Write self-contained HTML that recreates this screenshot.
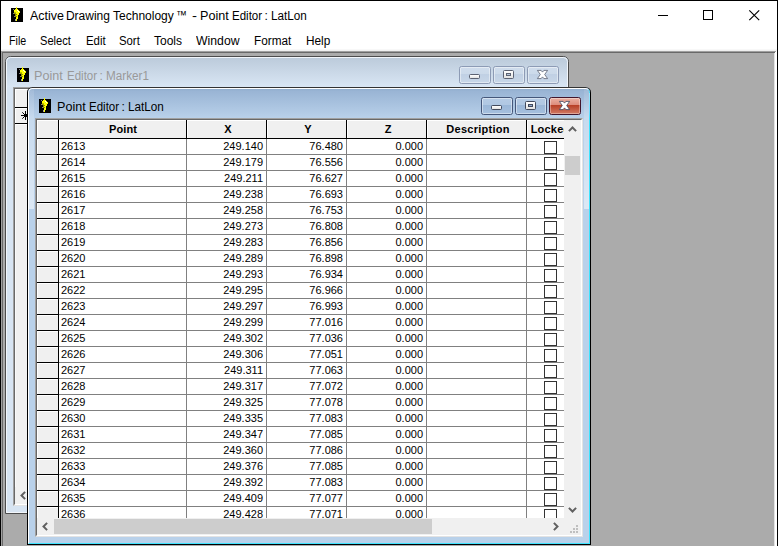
<!DOCTYPE html><html><head><meta charset="utf-8"><title>Active Drawing Technology</title><style>
html,body{margin:0;padding:0;}
body{width:778px;height:546px;overflow:hidden;position:relative;background:#ababab;font-family:"Liberation Sans",sans-serif;}
div,span,svg{position:absolute;box-sizing:border-box;}
.t{white-space:nowrap;transform-origin:0 0;}
.ico{display:block;}
#top{left:0;top:0;width:778px;height:51px;background:#fff;}
.ttl{font-size:12px;line-height:14px;color:#000;top:9px;}
.mi{font-size:12px;line-height:14px;color:#000;top:34px;}
.win{width:564px;height:458px;border:1px solid #000;border-radius:5.5px 5.5px 0 0;overflow:hidden;}
.cap{font-size:12px;line-height:14px;}
.btn{width:32px;height:18px;top:9px;border-radius:2.5px;border:1px solid #4a5c7c;}
.btn i{position:absolute;left:0;top:0;right:0;bottom:0;border:1px solid rgba(255,255,255,.45);border-radius:1.5px;}
.cli{background:#f0f0f0;}
.hc{background:#f0f0f0;border-left:1px solid #fff;border-top:1px solid #fff;font-weight:bold;font-size:11px;line-height:13px;text-align:center;height:18px;top:0;padding-top:2px;overflow:hidden;white-space:nowrap;}
.row{left:0;width:527px;height:16px;font-size:11px;line-height:13px;}
.row span{top:1px;white-space:nowrap;}
.cb{width:13px;height:13px;border:1px solid #333;background:#fff;left:507px;}
</style></head><body><div id="top"></div><div style="left:0;top:49px;width:778px;height:1px;background:#f8f8f8"></div><div style="left:0;top:50px;width:778px;height:1px;background:#f0f0f0"></div><div style="left:0;top:51px;width:778px;height:1px;background:#a0a0a0"></div><div style="left:2px;top:52px;width:773px;height:1px;background:#696969"></div><div style="left:1px;top:51px;width:1px;height:495px;background:#a0a0a0"></div><div style="left:2px;top:52px;width:1px;height:494px;background:#696969"></div><div style="left:774px;top:53px;width:1px;height:493px;background:#e3e3e3"></div><div style="left:775px;top:52px;width:2px;height:494px;background:#fff"></div><div style="left:776px;top:51px;width:1px;height:1px;background:#fff"></div><svg class="ico" style="left:11px;top:7px" width="12" height="15" viewBox="0 -1 12 15" shape-rendering="crispEdges"><rect x="0" y="0" width="12" height="14" fill="#000"/><rect x="5" y="-1" width="1" height="1" fill="#ffff00"/><rect x="5" y="0" width="1" height="1" fill="#ffff00"/><rect x="4" y="1" width="3" height="1" fill="#ffff00"/><rect x="2" y="1" width="1" height="1" fill="#808080"/><rect x="3" y="2" width="5" height="1" fill="#ffff00"/><rect x="6" y="2" width="1" height="1" fill="#ffffff"/><rect x="3" y="3" width="6" height="1" fill="#ffff00"/><rect x="7" y="3" width="1" height="1" fill="#ffffff"/><rect x="3" y="4" width="2" height="1" fill="#c0c000"/><rect x="5" y="4" width="4" height="1" fill="#ffff00"/><rect x="2" y="5" width="1" height="1" fill="#808080"/><rect x="3" y="5" width="2" height="1" fill="#a0a000"/><rect x="5" y="5" width="3" height="1" fill="#ffff00"/><rect x="4" y="6" width="2" height="1" fill="#909000"/><rect x="6" y="6" width="2" height="1" fill="#ffff00"/><rect x="4" y="7" width="1" height="1" fill="#909000"/><rect x="5" y="7" width="2" height="1" fill="#ffff00"/><rect x="3" y="8" width="1" height="1" fill="#808080"/><rect x="4" y="8" width="2" height="1" fill="#909000"/><rect x="6" y="8" width="1" height="1" fill="#ffff00"/><rect x="5" y="9" width="2" height="1" fill="#ffff00"/><rect x="5" y="10" width="2" height="1" fill="#ffff00"/><rect x="4" y="11" width="1" height="1" fill="#a0a0a0"/><rect x="5" y="11" width="1" height="1" fill="#ffff00"/><rect x="4" y="12" width="1" height="1" fill="#a0a0a0"/><rect x="5" y="12" width="1" height="1" fill="#ffff00"/></svg><span class="t ttl" style="left:30.20px;transform:scaleX(1.04)">Active </span><span class="t ttl" style="left:65.95px;transform:scaleX(1.0)">Drawing Technology </span><span class="t ttl" id="t2" style="left:176px;top:8px;transform:scaleX(.9)">™</span><span class="t ttl" style="left:191.86px;transform:scaleX(1.25)">- </span><span class="t ttl" style="left:199.56px;transform:scaleX(1.05)">Point </span><span class="t ttl" style="left:231.99px;transform:scaleX(0.96)">Editor </span><span class="t ttl" style="left:264.50px;transform:scaleX(1)">: </span><span class="t ttl" style="left:270.92px;transform:scaleX(0.977)">LatLon </span><span class="t mi" id="m0" style="left:8.5px;transform:scaleX(0.89)">File</span><span class="t mi" id="m1" style="left:40px;transform:scaleX(0.927)">Select</span><span class="t mi" id="m2" style="left:85.5px;transform:scaleX(0.95)">Edit</span><span class="t mi" id="m3" style="left:119px;transform:scaleX(0.945)">Sort</span><span class="t mi" id="m4" style="left:154px;transform:scaleX(1)">Tools</span><span class="t mi" id="m5" style="left:195.5px;transform:scaleX(1.02)">Window</span><span class="t mi" id="m6" style="left:253.5px;transform:scaleX(0.98)">Format</span><span class="t mi" id="m7" style="left:305.5px;transform:scaleX(0.985)">Help</span><svg style="left:655px;top:5px" width="110" height="22" viewBox="655 5 110 22" shape-rendering="crispEdges"><rect x="658" y="15" width="10" height="1" fill="#000"/><rect x="703.5" y="10.5" width="9" height="9" fill="none" stroke="#000" stroke-width="1"/><g shape-rendering="auto"><path d="M749.3 10.3 L759.2 20.2 M759.2 10.3 L749.3 20.2" stroke="#000" stroke-width="1.15" fill="none"/></g></svg><div style="left:0;top:0;width:778px;height:1px;background:#000"></div><div style="left:0;top:0;width:1px;height:546px;background:#000"></div><div style="left:777px;top:0;width:1px;height:546px;background:#000"></div><div class="win" style="left:5px;top:56px;border-color:#4c4c4c;background:#d7e4f2"><div style="left:0;top:0;width:562px;height:30px;background:linear-gradient(#bbcada,#d9e6f4)"></div><div style="left:0;top:0;width:562px;height:456px;border:1px solid #f2f6fb;border-radius:4.5px 4.5px 0 0;"></div><svg class="ico" style="left:11px;top:10px" width="12" height="15" viewBox="0 -1 12 15" shape-rendering="crispEdges"><rect x="0" y="0" width="12" height="14" fill="#000"/><rect x="5" y="-1" width="1" height="1" fill="#ffff00"/><rect x="5" y="0" width="1" height="1" fill="#ffff00"/><rect x="4" y="1" width="3" height="1" fill="#ffff00"/><rect x="2" y="1" width="1" height="1" fill="#808080"/><rect x="3" y="2" width="5" height="1" fill="#ffff00"/><rect x="6" y="2" width="1" height="1" fill="#ffffff"/><rect x="3" y="3" width="6" height="1" fill="#ffff00"/><rect x="7" y="3" width="1" height="1" fill="#ffffff"/><rect x="3" y="4" width="2" height="1" fill="#c0c000"/><rect x="5" y="4" width="4" height="1" fill="#ffff00"/><rect x="2" y="5" width="1" height="1" fill="#808080"/><rect x="3" y="5" width="2" height="1" fill="#a0a000"/><rect x="5" y="5" width="3" height="1" fill="#ffff00"/><rect x="4" y="6" width="2" height="1" fill="#909000"/><rect x="6" y="6" width="2" height="1" fill="#ffff00"/><rect x="4" y="7" width="1" height="1" fill="#909000"/><rect x="5" y="7" width="2" height="1" fill="#ffff00"/><rect x="3" y="8" width="1" height="1" fill="#808080"/><rect x="4" y="8" width="2" height="1" fill="#909000"/><rect x="6" y="8" width="1" height="1" fill="#ffff00"/><rect x="5" y="9" width="2" height="1" fill="#ffff00"/><rect x="5" y="10" width="2" height="1" fill="#ffff00"/><rect x="4" y="11" width="1" height="1" fill="#a0a0a0"/><rect x="5" y="11" width="1" height="1" fill="#ffff00"/><rect x="4" y="12" width="1" height="1" fill="#a0a0a0"/><rect x="5" y="12" width="1" height="1" fill="#ffff00"/></svg><span class="t cap" style="left:28.45px;transform:scaleX(1.05);top:12px;color:#999">Point </span><span class="t cap" style="left:60.89px;transform:scaleX(0.96);top:12px;color:#999">Editor </span><span class="t cap" style="left:93.40px;transform:scaleX(1);top:12px;color:#999">: </span><span class="t cap" style="left:99.82px;transform:scaleX(0.975);top:12px;color:#999">Marker1 </span><div class="btn" style="left:453px;background:linear-gradient(#cfdcec 0,#ccdaea 44%,#c0d0e4 45%,#c8d7e8 100%);border-color:#8d9bb5"><i></i></div><div class="btn" style="left:487px;background:linear-gradient(#cfdcec 0,#ccdaea 44%,#c0d0e4 45%,#c8d7e8 100%);border-color:#8d9bb5"><i></i></div><div class="btn" style="left:521px;background:linear-gradient(#cfdcec 0,#ccdaea 44%,#c0d0e4 45%,#c8d7e8 100%);border-color:#8d9bb5"><i></i></div><div style="left:463px;top:17px;width:11px;height:5px;background:linear-gradient(#fff,#e2e2e2);border:1px solid #5c6272;border-radius:1.5px"></div><div style="left:497px;top:13px;width:11px;height:9px;background:linear-gradient(#fff,#e2e2e2);border:1px solid #5c6272;border-radius:1.5px"></div><div style="left:500px;top:16px;width:5px;height:3px;background:#b8c8dc;border:1px solid #5c6272"></div><svg style="left:530px;top:12px" width="13" height="11" viewBox="-1 -1 13 11"><path d="M0.4 0.4 H4.1 L5.5 2.1 L6.9 0.4 H10.6 L7.7 4.5 L10.6 8.6 H6.9 L5.5 6.9 L4.1 8.6 H0.4 L3.3 4.5 Z" fill="#fff" stroke="#5c6272" stroke-width=".8" stroke-linejoin="round"/></svg><div style="left:7px;top:30px;width:548px;height:419px;border:1px solid;border-color:#a0a0a0 #e3e3e3 #e3e3e3 #a0a0a0;"></div><div class="cli" style="left:8px;top:31px;width:546px;height:417px;border:1px solid;border-color:#696969 #fff #fff #696969;"><div class="hc" style="left:0;width:22px"></div><div style="left:0;top:18px;width:22px;height:1px;background:#000"></div><div style="left:0;top:19px;width:22px;height:15px;border-left:1px solid #fff;border-top:1px solid #fff"></div><div style="left:0;top:34px;width:22px;height:1px;background:#000"></div><div style="left:0;top:35px;width:22px;height:363px;border-left:1px solid #fafafa;border-top:1px solid #fff"></div><svg style="left:5px;top:22px" width="10" height="10" viewBox="0 0 10 10"><path d="M5.5 0 V9 M1 4.5 H10 M2.3 1.3 L8.7 7.7 M8.7 1.3 L2.3 7.7" stroke="#000" stroke-width="1" fill="none"/><rect x="4" y="3" width="3" height="3" fill="#000"/></svg><span style="left:5px;top:398px;font-size:11px;color:#606060" class="arr"></span><svg style="left:5px;top:402px" width="7" height="9" viewBox="0 0 7 9"><path d="M5.1 0.9 L1.5 4.5 L5.1 8.1" fill="none" stroke="#606060" stroke-width="2"/></svg></div></div><div class="win" style="left:27px;top:87px;border-color:#333 #000 #000 #000;background:#b9d1ea"><div style="left:0;top:0;width:562px;height:30px;background:linear-gradient(#90adcd,#9ab5d5 12%,#b9d1ea)"></div><div style="left:0;top:0;width:562px;height:456px;border:1px solid #fff;border-radius:4.5px 4.5px 0 0;border-right-color:#3fe4ff;border-bottom-color:#3fe4ff;"></div><div style="left:1px;top:1px;width:5px;height:120px;background:linear-gradient(rgba(255,255,255,.1),rgba(255,255,255,.5))"></div><div style="left:556px;top:1px;width:5px;height:120px;background:linear-gradient(rgba(255,255,255,.1),rgba(255,255,255,.5))"></div><div style="left:561px;top:5px;width:1px;height:26px;background:linear-gradient(#9be6fb,#6fdcfd 70%,#3fe4ff)"></div><svg class="ico" style="left:11px;top:10px" width="12" height="15" viewBox="0 -1 12 15" shape-rendering="crispEdges"><rect x="0" y="0" width="12" height="14" fill="#000"/><rect x="5" y="-1" width="1" height="1" fill="#ffff00"/><rect x="5" y="0" width="1" height="1" fill="#ffff00"/><rect x="4" y="1" width="3" height="1" fill="#ffff00"/><rect x="2" y="1" width="1" height="1" fill="#808080"/><rect x="3" y="2" width="5" height="1" fill="#ffff00"/><rect x="6" y="2" width="1" height="1" fill="#ffffff"/><rect x="3" y="3" width="6" height="1" fill="#ffff00"/><rect x="7" y="3" width="1" height="1" fill="#ffffff"/><rect x="3" y="4" width="2" height="1" fill="#c0c000"/><rect x="5" y="4" width="4" height="1" fill="#ffff00"/><rect x="2" y="5" width="1" height="1" fill="#808080"/><rect x="3" y="5" width="2" height="1" fill="#a0a000"/><rect x="5" y="5" width="3" height="1" fill="#ffff00"/><rect x="4" y="6" width="2" height="1" fill="#909000"/><rect x="6" y="6" width="2" height="1" fill="#ffff00"/><rect x="4" y="7" width="1" height="1" fill="#909000"/><rect x="5" y="7" width="2" height="1" fill="#ffff00"/><rect x="3" y="8" width="1" height="1" fill="#808080"/><rect x="4" y="8" width="2" height="1" fill="#909000"/><rect x="6" y="8" width="1" height="1" fill="#ffff00"/><rect x="5" y="9" width="2" height="1" fill="#ffff00"/><rect x="5" y="10" width="2" height="1" fill="#ffff00"/><rect x="4" y="11" width="1" height="1" fill="#a0a0a0"/><rect x="5" y="11" width="1" height="1" fill="#ffff00"/><rect x="4" y="12" width="1" height="1" fill="#a0a0a0"/><rect x="5" y="12" width="1" height="1" fill="#ffff00"/></svg><span class="t cap" style="left:28.66px;transform:scaleX(1.05);top:12px;color:#000">Point </span><span class="t cap" style="left:61.09px;transform:scaleX(0.96);top:12px;color:#000">Editor </span><span class="t cap" style="left:93.60px;transform:scaleX(1);top:12px;color:#000">: </span><span class="t cap" style="left:100.02px;transform:scaleX(0.977);top:12px;color:#000">LatLon </span><div class="btn" style="left:453px;background:linear-gradient(#b5cbe5 0,#b0c7e2 44%,#9bb7d8 45%,#a6c0de 100%);border-color:#45577a"><i></i></div><div class="btn" style="left:487px;background:linear-gradient(#b5cbe5 0,#b0c7e2 44%,#9bb7d8 45%,#a6c0de 100%);border-color:#45577a"><i></i></div><div class="btn" style="left:521px;background:linear-gradient(#eab0a2 0,#dd8b7a 44%,#b73f25 45%,#d17a64 100%);border-color:#43152a"><i style="border-color:rgba(255,255,255,.35)"></i></div><div style="left:463px;top:17px;width:11px;height:5px;background:linear-gradient(#fff,#e2e2e2);border:1px solid #434a5c;border-radius:1.5px"></div><div style="left:497px;top:13px;width:11px;height:9px;background:linear-gradient(#fff,#e2e2e2);border:1px solid #434a5c;border-radius:1.5px"></div><div style="left:500px;top:16px;width:5px;height:3px;background:#8fa9cc;border:1px solid #434a5c"></div><svg style="left:530px;top:12px" width="13" height="11" viewBox="-1 -1 13 11"><path d="M0.4 0.4 H4.1 L5.5 2.1 L6.9 0.4 H10.6 L7.7 4.5 L10.6 8.6 H6.9 L5.5 6.9 L4.1 8.6 H0.4 L3.3 4.5 Z" fill="#fff" stroke="#3d4660" stroke-width=".8" stroke-linejoin="round"/></svg><div style="left:7px;top:30px;width:548px;height:419px;border:1px solid;border-color:#a0a0a0 #e3e3e3 #e3e3e3 #a0a0a0;"></div><div class="cli" style="left:8px;top:31px;width:546px;height:417px;border:1px solid;border-color:#696969 #fff #fff #696969;overflow:hidden"><div id="grid" style="left:0;top:0;width:527px;height:398px;background:#fff;overflow:hidden"><div class="hc" style="left:0px;width:21px"></div><div style="left:21px;top:0;width:1px;height:19px;background:#000"></div><div class="hc" style="left:22px;width:127px;letter-spacing:.1px">Point</div><div style="left:149px;top:0;width:1px;height:19px;background:#000"></div><div class="hc" style="left:150px;width:79px;padding-left:2px">X</div><div style="left:229px;top:0;width:1px;height:19px;background:#000"></div><div class="hc" style="left:230px;width:79px;padding-left:2px">Y</div><div style="left:309px;top:0;width:1px;height:19px;background:#000"></div><div class="hc" style="left:310px;width:79px;padding-left:2px">Z</div><div style="left:389px;top:0;width:1px;height:19px;background:#000"></div><div class="hc" style="left:390px;width:99px;padding-left:2px;letter-spacing:.25px">Description</div><div style="left:489px;top:0;width:1px;height:19px;background:#000"></div><div class="hc" style="left:490px;width:37px;text-align:left;padding-left:2.7px;letter-spacing:.2px">Locked</div><div style="left:536px;top:0;width:1px;height:19px;background:#000"></div><div style="left:0;top:18px;width:600px;height:1px;background:#000"></div><div class="row" style="top:19px"><div style="left:0;top:0;width:21px;height:15px;background:#f0f0f0;border-left:1px solid #fff;border-top:1px solid #fff"></div><div style="left:0;top:15px;width:22px;height:1px;background:#000"></div><div style="left:22px;top:15px;width:560px;height:1px;background:#808080"></div><span style="left:24px">2613</span><span style="right:301px">249.140</span><span style="right:221px">76.480</span><span style="right:141px">0.000</span><div class="cb" style="top:2px"></div></div><div class="row" style="top:35px"><div style="left:0;top:0;width:21px;height:15px;background:#f0f0f0;border-left:1px solid #fff;border-top:1px solid #fff"></div><div style="left:0;top:15px;width:22px;height:1px;background:#000"></div><div style="left:22px;top:15px;width:560px;height:1px;background:#808080"></div><span style="left:24px">2614</span><span style="right:301px">249.179</span><span style="right:221px">76.556</span><span style="right:141px">0.000</span><div class="cb" style="top:2px"></div></div><div class="row" style="top:51px"><div style="left:0;top:0;width:21px;height:15px;background:#f0f0f0;border-left:1px solid #fff;border-top:1px solid #fff"></div><div style="left:0;top:15px;width:22px;height:1px;background:#000"></div><div style="left:22px;top:15px;width:560px;height:1px;background:#808080"></div><span style="left:24px">2615</span><span style="right:301px">249.211</span><span style="right:221px">76.627</span><span style="right:141px">0.000</span><div class="cb" style="top:2px"></div></div><div class="row" style="top:67px"><div style="left:0;top:0;width:21px;height:15px;background:#f0f0f0;border-left:1px solid #fff;border-top:1px solid #fff"></div><div style="left:0;top:15px;width:22px;height:1px;background:#000"></div><div style="left:22px;top:15px;width:560px;height:1px;background:#808080"></div><span style="left:24px">2616</span><span style="right:301px">249.238</span><span style="right:221px">76.693</span><span style="right:141px">0.000</span><div class="cb" style="top:2px"></div></div><div class="row" style="top:83px"><div style="left:0;top:0;width:21px;height:15px;background:#f0f0f0;border-left:1px solid #fff;border-top:1px solid #fff"></div><div style="left:0;top:15px;width:22px;height:1px;background:#000"></div><div style="left:22px;top:15px;width:560px;height:1px;background:#808080"></div><span style="left:24px">2617</span><span style="right:301px">249.258</span><span style="right:221px">76.753</span><span style="right:141px">0.000</span><div class="cb" style="top:2px"></div></div><div class="row" style="top:99px"><div style="left:0;top:0;width:21px;height:15px;background:#f0f0f0;border-left:1px solid #fff;border-top:1px solid #fff"></div><div style="left:0;top:15px;width:22px;height:1px;background:#000"></div><div style="left:22px;top:15px;width:560px;height:1px;background:#808080"></div><span style="left:24px">2618</span><span style="right:301px">249.273</span><span style="right:221px">76.808</span><span style="right:141px">0.000</span><div class="cb" style="top:2px"></div></div><div class="row" style="top:115px"><div style="left:0;top:0;width:21px;height:15px;background:#f0f0f0;border-left:1px solid #fff;border-top:1px solid #fff"></div><div style="left:0;top:15px;width:22px;height:1px;background:#000"></div><div style="left:22px;top:15px;width:560px;height:1px;background:#808080"></div><span style="left:24px">2619</span><span style="right:301px">249.283</span><span style="right:221px">76.856</span><span style="right:141px">0.000</span><div class="cb" style="top:2px"></div></div><div class="row" style="top:131px"><div style="left:0;top:0;width:21px;height:15px;background:#f0f0f0;border-left:1px solid #fff;border-top:1px solid #fff"></div><div style="left:0;top:15px;width:22px;height:1px;background:#000"></div><div style="left:22px;top:15px;width:560px;height:1px;background:#808080"></div><span style="left:24px">2620</span><span style="right:301px">249.289</span><span style="right:221px">76.898</span><span style="right:141px">0.000</span><div class="cb" style="top:2px"></div></div><div class="row" style="top:147px"><div style="left:0;top:0;width:21px;height:15px;background:#f0f0f0;border-left:1px solid #fff;border-top:1px solid #fff"></div><div style="left:0;top:15px;width:22px;height:1px;background:#000"></div><div style="left:22px;top:15px;width:560px;height:1px;background:#808080"></div><span style="left:24px">2621</span><span style="right:301px">249.293</span><span style="right:221px">76.934</span><span style="right:141px">0.000</span><div class="cb" style="top:2px"></div></div><div class="row" style="top:163px"><div style="left:0;top:0;width:21px;height:15px;background:#f0f0f0;border-left:1px solid #fff;border-top:1px solid #fff"></div><div style="left:0;top:15px;width:22px;height:1px;background:#000"></div><div style="left:22px;top:15px;width:560px;height:1px;background:#808080"></div><span style="left:24px">2622</span><span style="right:301px">249.295</span><span style="right:221px">76.966</span><span style="right:141px">0.000</span><div class="cb" style="top:2px"></div></div><div class="row" style="top:179px"><div style="left:0;top:0;width:21px;height:15px;background:#f0f0f0;border-left:1px solid #fff;border-top:1px solid #fff"></div><div style="left:0;top:15px;width:22px;height:1px;background:#000"></div><div style="left:22px;top:15px;width:560px;height:1px;background:#808080"></div><span style="left:24px">2623</span><span style="right:301px">249.297</span><span style="right:221px">76.993</span><span style="right:141px">0.000</span><div class="cb" style="top:2px"></div></div><div class="row" style="top:195px"><div style="left:0;top:0;width:21px;height:15px;background:#f0f0f0;border-left:1px solid #fff;border-top:1px solid #fff"></div><div style="left:0;top:15px;width:22px;height:1px;background:#000"></div><div style="left:22px;top:15px;width:560px;height:1px;background:#808080"></div><span style="left:24px">2624</span><span style="right:301px">249.299</span><span style="right:221px">77.016</span><span style="right:141px">0.000</span><div class="cb" style="top:2px"></div></div><div class="row" style="top:211px"><div style="left:0;top:0;width:21px;height:15px;background:#f0f0f0;border-left:1px solid #fff;border-top:1px solid #fff"></div><div style="left:0;top:15px;width:22px;height:1px;background:#000"></div><div style="left:22px;top:15px;width:560px;height:1px;background:#808080"></div><span style="left:24px">2625</span><span style="right:301px">249.302</span><span style="right:221px">77.036</span><span style="right:141px">0.000</span><div class="cb" style="top:2px"></div></div><div class="row" style="top:227px"><div style="left:0;top:0;width:21px;height:15px;background:#f0f0f0;border-left:1px solid #fff;border-top:1px solid #fff"></div><div style="left:0;top:15px;width:22px;height:1px;background:#000"></div><div style="left:22px;top:15px;width:560px;height:1px;background:#808080"></div><span style="left:24px">2626</span><span style="right:301px">249.306</span><span style="right:221px">77.051</span><span style="right:141px">0.000</span><div class="cb" style="top:2px"></div></div><div class="row" style="top:243px"><div style="left:0;top:0;width:21px;height:15px;background:#f0f0f0;border-left:1px solid #fff;border-top:1px solid #fff"></div><div style="left:0;top:15px;width:22px;height:1px;background:#000"></div><div style="left:22px;top:15px;width:560px;height:1px;background:#808080"></div><span style="left:24px">2627</span><span style="right:301px">249.311</span><span style="right:221px">77.063</span><span style="right:141px">0.000</span><div class="cb" style="top:2px"></div></div><div class="row" style="top:259px"><div style="left:0;top:0;width:21px;height:15px;background:#f0f0f0;border-left:1px solid #fff;border-top:1px solid #fff"></div><div style="left:0;top:15px;width:22px;height:1px;background:#000"></div><div style="left:22px;top:15px;width:560px;height:1px;background:#808080"></div><span style="left:24px">2628</span><span style="right:301px">249.317</span><span style="right:221px">77.072</span><span style="right:141px">0.000</span><div class="cb" style="top:2px"></div></div><div class="row" style="top:275px"><div style="left:0;top:0;width:21px;height:15px;background:#f0f0f0;border-left:1px solid #fff;border-top:1px solid #fff"></div><div style="left:0;top:15px;width:22px;height:1px;background:#000"></div><div style="left:22px;top:15px;width:560px;height:1px;background:#808080"></div><span style="left:24px">2629</span><span style="right:301px">249.325</span><span style="right:221px">77.078</span><span style="right:141px">0.000</span><div class="cb" style="top:2px"></div></div><div class="row" style="top:291px"><div style="left:0;top:0;width:21px;height:15px;background:#f0f0f0;border-left:1px solid #fff;border-top:1px solid #fff"></div><div style="left:0;top:15px;width:22px;height:1px;background:#000"></div><div style="left:22px;top:15px;width:560px;height:1px;background:#808080"></div><span style="left:24px">2630</span><span style="right:301px">249.335</span><span style="right:221px">77.083</span><span style="right:141px">0.000</span><div class="cb" style="top:2px"></div></div><div class="row" style="top:307px"><div style="left:0;top:0;width:21px;height:15px;background:#f0f0f0;border-left:1px solid #fff;border-top:1px solid #fff"></div><div style="left:0;top:15px;width:22px;height:1px;background:#000"></div><div style="left:22px;top:15px;width:560px;height:1px;background:#808080"></div><span style="left:24px">2631</span><span style="right:301px">249.347</span><span style="right:221px">77.085</span><span style="right:141px">0.000</span><div class="cb" style="top:2px"></div></div><div class="row" style="top:323px"><div style="left:0;top:0;width:21px;height:15px;background:#f0f0f0;border-left:1px solid #fff;border-top:1px solid #fff"></div><div style="left:0;top:15px;width:22px;height:1px;background:#000"></div><div style="left:22px;top:15px;width:560px;height:1px;background:#808080"></div><span style="left:24px">2632</span><span style="right:301px">249.360</span><span style="right:221px">77.086</span><span style="right:141px">0.000</span><div class="cb" style="top:2px"></div></div><div class="row" style="top:339px"><div style="left:0;top:0;width:21px;height:15px;background:#f0f0f0;border-left:1px solid #fff;border-top:1px solid #fff"></div><div style="left:0;top:15px;width:22px;height:1px;background:#000"></div><div style="left:22px;top:15px;width:560px;height:1px;background:#808080"></div><span style="left:24px">2633</span><span style="right:301px">249.376</span><span style="right:221px">77.085</span><span style="right:141px">0.000</span><div class="cb" style="top:2px"></div></div><div class="row" style="top:355px"><div style="left:0;top:0;width:21px;height:15px;background:#f0f0f0;border-left:1px solid #fff;border-top:1px solid #fff"></div><div style="left:0;top:15px;width:22px;height:1px;background:#000"></div><div style="left:22px;top:15px;width:560px;height:1px;background:#808080"></div><span style="left:24px">2634</span><span style="right:301px">249.392</span><span style="right:221px">77.083</span><span style="right:141px">0.000</span><div class="cb" style="top:2px"></div></div><div class="row" style="top:371px"><div style="left:0;top:0;width:21px;height:15px;background:#f0f0f0;border-left:1px solid #fff;border-top:1px solid #fff"></div><div style="left:0;top:15px;width:22px;height:1px;background:#000"></div><div style="left:22px;top:15px;width:560px;height:1px;background:#808080"></div><span style="left:24px">2635</span><span style="right:301px">249.409</span><span style="right:221px">77.077</span><span style="right:141px">0.000</span><div class="cb" style="top:2px"></div></div><div class="row" style="top:387px"><div style="left:0;top:0;width:21px;height:15px;background:#f0f0f0;border-left:1px solid #fff;border-top:1px solid #fff"></div><div style="left:0;top:15px;width:22px;height:1px;background:#000"></div><div style="left:22px;top:15px;width:560px;height:1px;background:#808080"></div><span style="left:24px">2636</span><span style="right:301px">249.428</span><span style="right:221px">77.071</span><span style="right:141px">0.000</span><div class="cb" style="top:2px"></div></div><div style="left:21px;top:19px;width:1px;height:400px;background:#000"></div><div style="left:149px;top:19px;width:1px;height:400px;background:#808080"></div><div style="left:229px;top:19px;width:1px;height:400px;background:#808080"></div><div style="left:309px;top:19px;width:1px;height:400px;background:#808080"></div><div style="left:389px;top:19px;width:1px;height:400px;background:#808080"></div><div style="left:489px;top:19px;width:1px;height:400px;background:#808080"></div></div><div style="left:527px;top:0;width:17px;height:398px;background:#f0f0f0"></div><div style="left:528px;top:36px;width:15px;height:19px;background:#cdcdcd"></div><svg style="left:531px;top:5px" width="9" height="7" viewBox="0 0 9 7"><path d="M0.9 6.1 L4.5 2.5 L8.1 6.1" fill="none" stroke="#606060" stroke-width="2"/></svg><svg style="left:531px;top:386px" width="9" height="7" viewBox="0 0 9 7"><path d="M0.9 1.9 L4.5 5.5 L8.1 1.9" fill="none" stroke="#606060" stroke-width="2"/></svg><div style="left:0;top:398px;width:527px;height:17px;background:#f0f0f0"></div><div style="left:17px;top:399px;width:378px;height:15px;background:#cdcdcd"></div><svg style="left:5px;top:402px" width="7" height="9" viewBox="0 0 7 9"><path d="M5.1 0.9 L1.5 4.5 L5.1 8.1" fill="none" stroke="#606060" stroke-width="2"/></svg><svg style="left:515px;top:402px" width="7" height="9" viewBox="0 0 7 9"><path d="M1.9 0.9 L5.5 4.5 L1.9 8.1" fill="none" stroke="#606060" stroke-width="2"/></svg><svg style="left:530px;top:400px" width="14" height="14" viewBox="0 0 14 14" shape-rendering="crispEdges"><rect x="9" y="5" width="2" height="2" fill="#bfbfbf"/><rect x="6" y="8" width="2" height="2" fill="#bfbfbf"/><rect x="9" y="8" width="2" height="2" fill="#bfbfbf"/><rect x="3" y="11" width="2" height="2" fill="#bfbfbf"/><rect x="6" y="11" width="2" height="2" fill="#bfbfbf"/><rect x="9" y="11" width="2" height="2" fill="#bfbfbf"/></svg></div></div></body></html>
